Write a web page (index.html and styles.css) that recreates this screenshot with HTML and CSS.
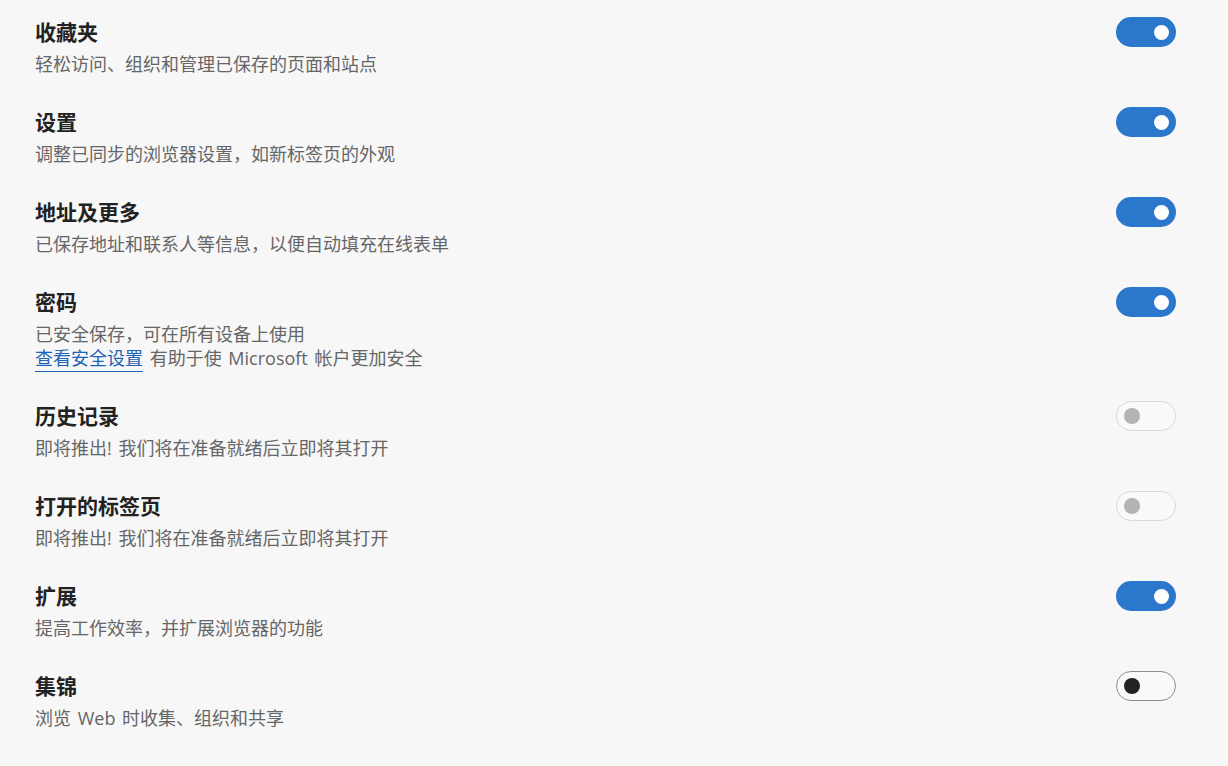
FILE: index.html
```html
<!DOCTYPE html>
<html lang="zh-CN">
<head>
<meta charset="utf-8">
<title>同步</title>
<link rel="stylesheet" href="styles.css">
</head>
<body>
<div class="list">
  <div class="row">
    <div class="text">
      <div class="title">收藏夹</div>
      <div class="desc">轻松访问、组织和管理已保存的页面和站点</div>
    </div>
    <span class="toggle on"><span class="knob"></span></span>
  </div>
  <div class="row">
    <div class="text">
      <div class="title">设置</div>
      <div class="desc">调整已同步的浏览器设置，如新标签页的外观</div>
    </div>
    <span class="toggle on"><span class="knob"></span></span>
  </div>
  <div class="row">
    <div class="text">
      <div class="title">地址及更多</div>
      <div class="desc">已保存地址和联系人等信息，以便自动填充在线表单</div>
    </div>
    <span class="toggle on"><span class="knob"></span></span>
  </div>
  <div class="row">
    <div class="text">
      <div class="title">密码</div>
      <div class="desc">已安全保存，可在所有设备上使用</div>
      <div class="desc"><a class="link" href="#">查看安全设置</a> 有助于使 Microsoft 帐户更加安全</div>
    </div>
    <span class="toggle on"><span class="knob"></span></span>
  </div>
  <div class="row">
    <div class="text">
      <div class="title">历史记录</div>
      <div class="desc">即将推出! 我们将在准备就绪后立即将其打开</div>
    </div>
    <span class="toggle disabled"><span class="knob"></span></span>
  </div>
  <div class="row">
    <div class="text">
      <div class="title">打开的标签页</div>
      <div class="desc">即将推出! 我们将在准备就绪后立即将其打开</div>
    </div>
    <span class="toggle disabled"><span class="knob"></span></span>
  </div>
  <div class="row">
    <div class="text">
      <div class="title">扩展</div>
      <div class="desc">提高工作效率，并扩展浏览器的功能</div>
    </div>
    <span class="toggle on"><span class="knob"></span></span>
  </div>
  <div class="row">
    <div class="text">
      <div class="title">集锦</div>
      <div class="desc">浏览 Web 时收集、组织和共享</div>
    </div>
    <span class="toggle off"><span class="knob"></span></span>
  </div>
</div>
</body>
</html>
```

FILE: styles.css
```css
html, body {
  margin: 0;
  padding: 0;
  background: #f7f7f7;
}
body {
  font-family: "Open Sans", "Noto Sans CJK SC", sans-serif;
  width: 1228px;
  height: 766px;
  overflow: hidden;
}
.list {
  display: flex;
  flex-direction: column;
  gap: 30px;
  padding: 16px 52px 0 35px;
}
.row {
  display: flex;
  justify-content: space-between;
  align-items: flex-start;
}
.text {
  display: flex;
  flex-direction: column;
}
.title {
  font-size: 21px;
  font-weight: 700;
  line-height: 32px;
  color: #222222;
  margin-bottom: 4px;
}
.desc {
  font-size: 18px;
  line-height: 24px;
  color: #666666;
  word-spacing: 2px;
}
.link {
  color: #1d62b5;
  text-decoration: none;
  border-bottom: 1px solid #1d62b5;
  padding-bottom: 1px;
}
.toggle {
  position: relative;
  display: block;
  box-sizing: border-box;
  width: 60px;
  height: 30px;
  margin-top: 1px;
  border-radius: 15px;
  flex: none;
}
.toggle .knob {
  position: absolute;
  top: 50%;
  width: 15px;
  height: 15px;
  margin-top: -7.5px;
  border-radius: 50%;
}
.toggle.on {
  background: #2a77cc;
}
.toggle.on .knob {
  right: 7px;
  background: #ffffff;
}
.toggle.disabled {
  border: 1px solid #d9d9d9;
  background: #f9f9f9;
}
.toggle.disabled .knob {
  left: 7px;
  width: 16px;
  height: 16px;
  margin-top: -8px;
  background: #b3b3b3;
}
.toggle.off {
  border: 1px solid #8c8c8c;
  background: #f9f9f9;
}
.toggle.off .knob {
  left: 7px;
  width: 16px;
  height: 16px;
  margin-top: -8px;
  background: #222222;
}
```
